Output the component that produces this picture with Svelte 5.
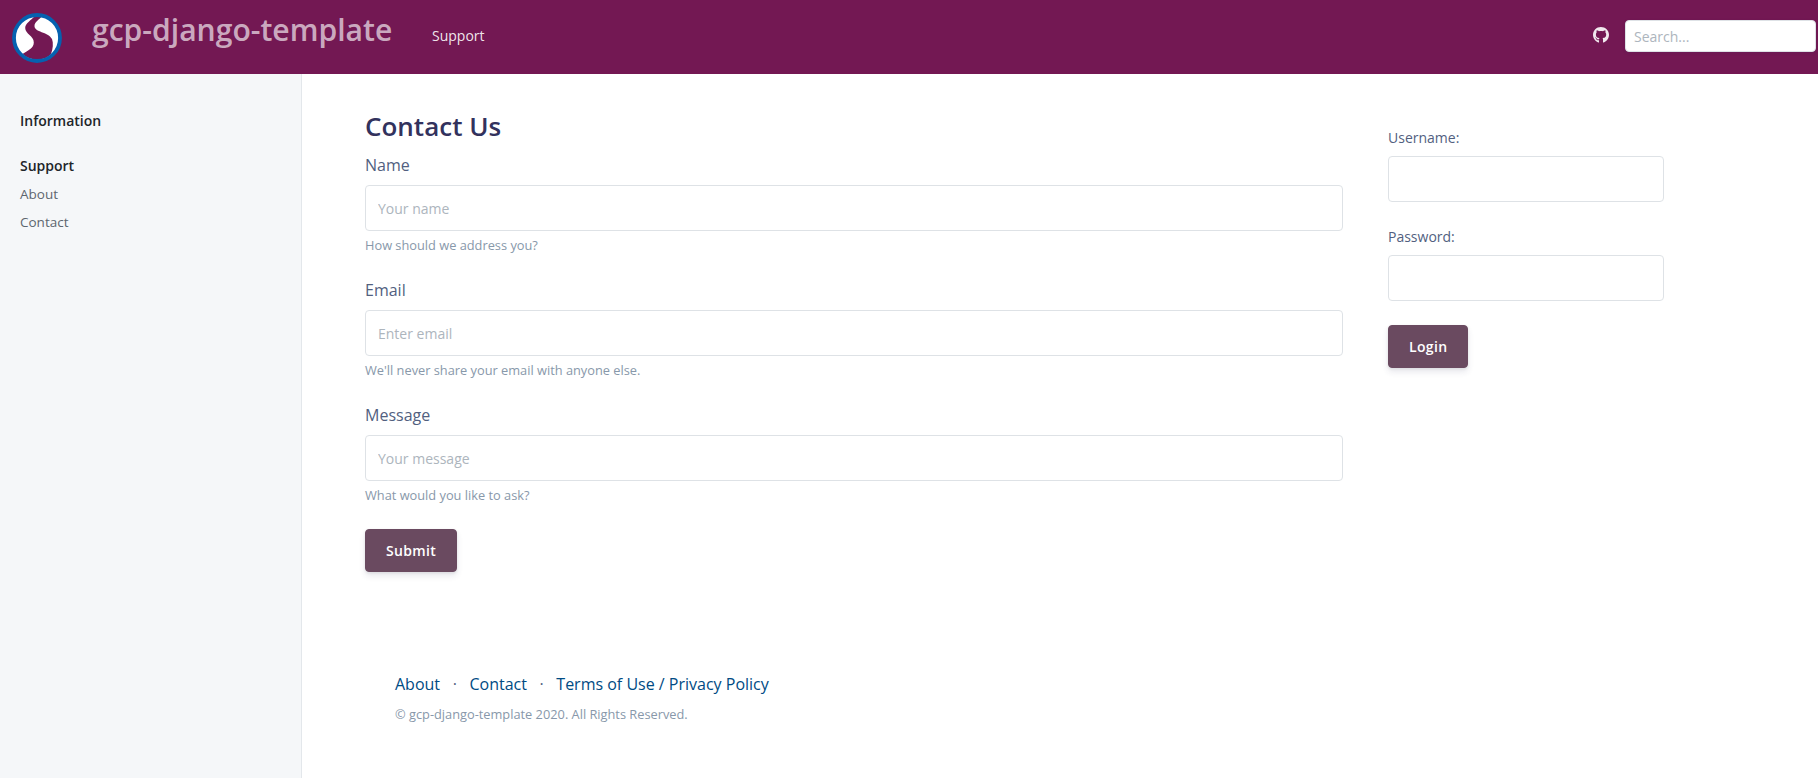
<script>
  const fields = [
    { label: 'Name', hint: 'Your name', help: 'How should we address you?', type: 'text' },
    { label: 'Email', hint: 'Enter email', help: "We'll never share your email with anyone else.", type: 'email' },
    { label: 'Message', hint: 'Your message', help: 'What would you like to ask?', type: 'text' }
  ];
</script>

<div class="page">
  <header>
    <svg class="logo" viewBox="0 0 50 50" aria-hidden="true">
      <circle cx="25" cy="25" r="22.5" fill="#fff" />
      <path d="M22.500 3.500C19 7 13.200 10.500 13.200 15C13.200 21 21.800 22.500 21.800 29.500C21.800 35 16 37.500 10.500 41C18 48 32 49 39 41C41 36 41.500 30 40 26C36 18.500 22.500 19.500 22.500 13C22.500 9 27 6.500 30 3.500Z" fill="#731853" />
      <circle cx="25" cy="25" r="23" fill="none" stroke="#0561b0" stroke-width="3.8" />
    </svg>
    <span class="brand">gcp-django-template</span>
    <a class="nav" href="#support">Support</a>
    <svg class="github" viewBox="0 0 496 496" aria-label="GitHub">
      <path fill="currentColor" d="M165.900 389.400c0 2-2.300 3.600-5.200 3.600-3.300.3-5.600-1.300-5.600-3.600 0-2 2.300-3.600 5.200-3.600 3-.3 5.600 1.300 5.600 3.600zm-31.100-4.500c-.7 2 1.300 4.300 4.300 4.900 2.600 1 5.600 0 6.200-2s-1.300-4.300-4.300-5.200c-2.600-.7-5.500.3-6.200 2.300zm44.200-1.700c-2.900.7-4.900 2.600-4.600 4.900.3 2 2.900 3.300 5.900 2.600 2.900-.7 4.900-2.600 4.600-4.600-.3-1.900-3-3.200-5.900-2.900zM244.800 0C106.100 0 0 105.300 0 244c0 110.900 69.800 205.800 169.500 239.200 12.800 2.300 17.300-5.600 17.300-12.100 0-6.200-.3-40.400-.3-61.400 0 0-70 15-84.700-29.800 0 0-11.400-29.100-27.800-36.600 0 0-22.900-15.700 1.600-15.400 0 0 24.900 2 38.600 25.800 21.900 38.600 58.600 27.500 72.900 20.900 2.300-16 8.800-27.100 16-33.700-55.900-6.200-112.300-14.300-112.300-110.500 0-27.500 7.600-41.300 23.600-58.900-2.600-6.500-11.100-33.300 2.600-67.900 20.900-6.500 69 27 69 27 20-5.600 41.500-8.500 62.800-8.500s42.800 2.900 62.800 8.500c0 0 48.100-33.600 69-27 13.700 34.700 5.200 61.400 2.600 67.900 16 17.700 25.800 31.500 25.800 58.900 0 96.500-58.900 104.200-114.800 110.500 9.200 7.900 17 22.900 17 46.400 0 33.700-.3 75.400-.3 83.600 0 6.500 4.600 14.400 17.300 12.100C428.200 449.800 496 354.900 496 244 496 105.300 383.500 0 244.800 0z" />
    </svg>
    <input class="search" type="search" placeholder="Search..." />
  </header>

  <div class="body">
    <nav class="side">
      <h2>Information</h2>
      <h2 class="second">Support</h2>
      <a href="#about">About</a>
      <a href="#contact">Contact</a>
    </nav>

    <main>
      <div class="columns">
        <form class="contact">
          <h1>Contact Us</h1>
          {#each fields as field}
            <label>
              <span>{field.label}</span>
              <input type={field.type} placeholder={field.hint} />
              <small>{field.help}</small>
            </label>
          {/each}
          <button type="button">Submit</button>
        </form>

        <form class="login">
          <label><span>Username:</span><input type="text" /></label>
          <label><span>Password:</span><input type="password" /></label>
          <button type="button">Login</button>
        </form>
      </div>

      <footer>
        <div class="links">
          <a href="#about">About</a><i>·</i><a href="#contact">Contact</a><i>·</i><a href="#terms">Terms of Use / Privacy Policy</a>
        </div>
        <small>© gcp-django-template 2020. All Rights Reserved.</small>
      </footer>
    </main>
  </div>
</div>

<style>
  :global(body) { overflow: hidden; }
  .page, .page * { box-sizing: border-box; }
  .page {
    height: 778px;
    display: flex;
    flex-direction: column;
    font: 400 16px/1.5 'Open Sans', sans-serif;
    color: #525f7f;
    background: #fff;
  }
  a { text-decoration: none; }
  header {
    flex: none;
    height: 74px;
    display: flex;
    align-items: flex-start;
    padding: 0 2px 0 12px;
    background: #731853;
  }
  .logo { width: 50px; height: 50px; margin-top: 13px; }
  .brand {
    margin: 7px 0 0 30px;
    width: 340px;
    font-size: 30.100px;
    font-weight: 600;
    line-height: 45px;
    white-space: nowrap;
    color: rgba(255, 255, 255, .65);
  }
  .nav { margin-top: 25px; font-size: 14px; line-height: 21px; color: rgba(255, 255, 255, .9); }
  .github { width: 16px; height: 16px; margin: 27px 16px 0 auto; color: rgba(255, 255, 255, .9); }
  input {
    display: block;
    width: 100%;
    height: 46px;
    padding: 10px 12px;
    border: 1px solid #dee2e6;
    border-radius: 4px;
    background: #fff;
    font: 400 14px/21px 'Open Sans', sans-serif;
    color: #8898aa;
    outline: 0;
  }
  input::placeholder { color: #adb5bd; opacity: 1; }
  .search {
    width: 191px;
    height: 32px;
    margin-top: 20px;
    padding: 4px 8px;
    appearance: none;
    box-shadow: 0 1px 3px rgba(50, 50, 93, .15);
  }
  .body { flex: 1; display: flex; min-height: 0; }
  .side {
    width: 302px;
    padding: 36px 20px;
    background: #f5f7f9;
    border-right: 1px solid #e3e7eb;
  }
  .side h2 { margin: 0; font-size: 14px; line-height: 21px; font-weight: 600; color: #212529; }
  .side .second { margin: 24px 0 8px; }
  .side a { display: block; font-size: 13.500px; line-height: 20px; margin-bottom: 8px; color: #5d666f; }
  main { flex: 1; padding: 33px 0 0 63px; }
  .columns { display: flex; gap: 45px; height: 561px; }
  .contact { width: 978px; }
  h1 { margin: 0 0 7px; font-size: 26px; line-height: 39px; font-weight: 600; color: #32325d; }
  label { display: block; margin-bottom: 24px; }
  label span { display: block; margin-bottom: 8px; }
  label small { display: block; margin: 5px 0 -1px; }
  small { font-size: 12.8px; line-height: 19.2px; color: #8898aa; }
  .login { width: 276px; padding-top: 20px; font-size: 14px; }
  button {
    display: block;
    padding: 10px 20px;
    border: 1px solid #6a4a60;
    border-radius: 4px;
    background: #6a4a60;
    color: #fff;
    font: 600 14px/21px 'Open Sans', sans-serif;
    letter-spacing: .35px;
    box-shadow: 0 4px 6px rgba(50, 50, 93, .11), 0 1px 3px rgba(0, 0, 0, .08);
  }
  footer { padding: 4px 0 0 30px; }
  .links { display: flex; margin-bottom: 9px; color: #525f7f; }
  .links a { color: #004b84; }
  .links i { width: 29.400px; text-align: center; font-style: normal; }
  footer small { display: block; }
</style>
